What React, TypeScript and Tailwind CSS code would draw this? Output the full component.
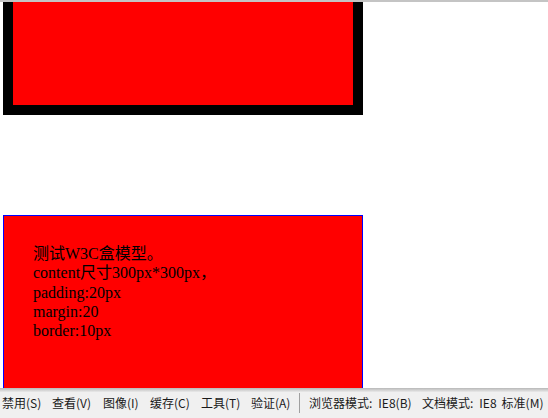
const items = [
  { t: '禁用(S)', w: 'w-[50px]' },
  { t: '查看(V)', w: 'w-[51px]' },
  { t: '图像(I)', w: 'w-[47px]' },
  { t: '缓存(C)', w: 'w-[51px]' },
  { t: '工具(T)', w: 'w-[50px]' },
  { t: '验证(A)', w: 'w-[48px]' },
]

export default function App() {
  return (
    <div className="h-[418px] w-[548px] overflow-hidden flex flex-col bg-white">
      <div className="flex-1 overflow-hidden border-t-2 border-[#c4c4c4]">
        {/* scrolled box: top border out of view */}
        <div className="ml-[3px] w-[360px] h-[113px] border-[10px] border-t-0 border-black bg-[#ff0000]" />
        <div
          className="ml-[3px] mt-[100px] w-[360px] h-[300px] border border-[#0000ff] bg-[#ff0000] pt-[28px] pl-[29px] text-[16px] leading-[19.3px] text-black"
          style={{ fontFamily: '"Liberation Serif", "Noto Sans CJK SC", serif' }}
        >
          <p>测试W3C盒模型。</p>
          <p>content尺寸300px*300px，</p>
          <p>padding:20px</p>
          <p>margin:20</p>
          <p>border:10px</p>
        </div>
      </div>
      <div
        className="h-[30px] shrink-0 flex items-center bg-[#f0f0f0] bg-gradient-to-b from-[#b8b8b8] via-[#f0f0f0] via-[15%] to-[#f0f0f0] pl-[2px] text-[12px] text-[#1a1a1a] whitespace-pre"
        style={{ fontFamily: '"Noto Sans CJK SC", "Noto Sans", sans-serif' }}
      >
        {items.map((it) => (
          <span key={it.t} className={`${it.w} shrink-0`}>
            {it.t}
          </span>
        ))}
        <div className="h-[20px] w-px bg-[#a0a0a0]" />
        <span className="ml-[9px] w-[113px] shrink-0">
          浏览器模式:<span className="ml-[6px]">IE8(B)</span>
        </span>
        <span className="shrink-0">
          文档模式:<span className="ml-[6px]">IE8</span>
          <span className="ml-[5px]">标准(M)</span>
        </span>
      </div>
    </div>
  )
}
